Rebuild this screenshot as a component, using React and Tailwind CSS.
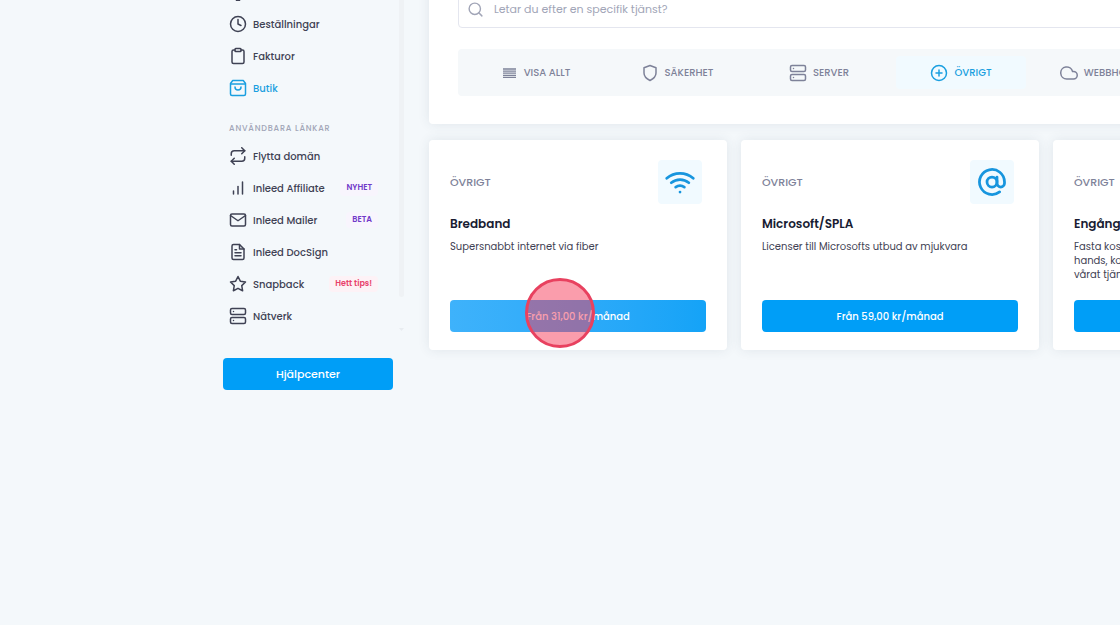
import {
  FiAtSign,
  FiBarChart,
  FiClipboard,
  FiClock,
  FiCloud,
  FiFileText,
  FiMail,
  FiPlusCircle,
  FiRepeat,
  FiSearch,
  FiServer,
  FiShield,
  FiStar,
  FiWifi,
} from "react-icons/fi";

const BagIcon = ({ className }) => (
  <svg
    className={className}
    viewBox="0 0 24 24"
    fill="none"
    stroke="currentColor"
    strokeWidth="2"
    strokeLinecap="round"
    strokeLinejoin="round"
  >
    <path d="M5 2h14l3 4v14a2 2 0 0 1-2 2H4a2 2 0 0 1-2-2V6z" />
    <path d="M2.5 6.500h19" />
    <path d="M16 10.500a4 4 0 0 1-8 0" />
  </svg>
);

const BulbIcon = ({ className }) => (
  <svg className={className} viewBox="0 0 24 24" fill="none" stroke="currentColor" strokeWidth="2" strokeLinecap="round">
    <path d="M8 17a7 7 0 1 1 8 0v2H8z" />
    <path d="M10.500 23h3" strokeWidth="3" />
  </svg>
);

const LinesIcon = ({ className }) => (
  <svg className={className} viewBox="0 0 18 18" stroke="currentColor" strokeWidth="1.300">
    <path d="M3 5h13M3 7.100h13M3 9.200h13M3 11.300h13M3 13.400h13" />
  </svg>
);

const accountLinks = [
  { label: "Tips", icon: BulbIcon },
  { label: "Beställningar", icon: FiClock },
  { label: "Fakturor", icon: FiClipboard },
  { label: "Butik", icon: BagIcon, active: true },
];

const usefulLinks = [
  { label: "Flytta domän", icon: FiRepeat },
  { label: "Inleed Affiliate", icon: FiBarChart, badge: "NYHET", badgeClass: "text-[#7239c9] bg-[#f8f5fd]" },
  { label: "Inleed Mailer", icon: FiMail, badge: "BETA", badgeClass: "text-[#7239c9] bg-[#f8f5fd]" },
  { label: "Inleed DocSign", icon: FiFileText },
  { label: "Snapback", icon: FiStar, badge: "Hett tips!", badgeClass: "text-[#e8416b] bg-[#fdf2f6]" },
  { label: "Nätverk", icon: FiServer },
];

const tabs = [
  { label: "VISA ALLT", icon: LinesIcon },
  { label: "SÄKERHET", icon: FiShield },
  { label: "SERVER", icon: FiServer },
  { label: "ÖVRIGT", icon: FiPlusCircle, active: true },
  { label: "WEBBHOTELL", icon: FiCloud },
  { label: "DOMÄN", icon: FiAtSign },
];

const products = [
  { title: "Bredband", text: "Supersnabbt internet via fiber", price: "Från 31,00 kr/månad", icon: FiWifi, hovered: true },
  { title: "Microsoft/SPLA", text: "Licenser till Microsofts utbud av mjukvara", price: "Från 59,00 kr/månad", icon: FiAtSign },
  {
    title: "Engångskostnad",
    text: "Fasta kostnader för olika engångsarbeten, remote hands, konsulttimmar samt installationer utöver vårat tjänsteutbud",
    price: "Från 99,00 kr",
    icon: FiPlusCircle,
  },
];

const SideLink = ({ item }) => {
  const Icon = item.icon;
  return (
    <li>
      <a
        href="#"
        className={`flex h-8 items-center gap-1.5 text-[10px] font-medium ${item.active ? "text-[#1a9fe0]" : "text-[#3f4254]"}`}
      >
        <Icon className="size-[18px]" />
        <span>{item.label}</span>
        {item.badge && (
          <span className={`ml-auto rounded px-1.5 py-0.5 text-[8px] font-semibold ${item.badgeClass}`}>{item.badge}</span>
        )}
      </a>
    </li>
  );
};

const ProductCard = ({ product }) => {
  const Icon = product.icon;
  return (
    <article className="flex min-h-[210px] flex-col rounded bg-white px-[21px] pt-5 pb-[18px] shadow-[0_0_12px_rgba(50,70,90,0.1)]">
      <div className="flex items-center justify-between pr-1">
        <span className="text-[11px] font-medium text-[#7e8299]">ÖVRIGT</span>
        <span className="flex size-11 items-center justify-center rounded bg-[#f1faff] text-[#1795de]">
          <Icon className="size-[30px]" strokeWidth="2.2" />
        </span>
      </div>
      <h2 className="mt-3 text-xs font-semibold leading-4 text-[#181c32]">{product.title}</h2>
      <p className="mt-2 text-[10px] leading-[14px] text-[#3f4254]">{product.text}</p>
      <button
        type="button"
        className={`mt-auto h-8 shrink-0 rounded text-[10px] font-medium text-white ${
          product.hovered ? "bg-linear-to-r from-[#3eb2fb] to-[#14a3f7]" : "bg-[#009ef7]"
        }`}
      >
        {product.price}
      </button>
    </article>
  );
};

export default function App() {
  return (
    <div className="relative flex min-h-screen items-start gap-[25px] overflow-hidden bg-[#f4f8fb] pl-[223px] font-['Poppins','Inter',sans-serif]">
      <aside className="w-[181px] shrink-0">
        <div className="flex justify-between pl-1.5">
          <div className="w-[149px]">
            <ul className="-mt-6">
              {accountLinks.map((item) => (
                <SideLink key={item.label} item={item} />
              ))}
            </ul>
            <h3 className="pt-[18px] pb-1 text-[8px] font-medium leading-[14px] tracking-widest text-[#a1a5b7]">
              ANVÄNDBARA LÄNKAR
            </h3>
            <ul>
              {usefulLinks.map((item) => (
                <SideLink key={item.label} item={item} />
              ))}
            </ul>
          </div>
          {/* scrollbar */}
          <div className="flex w-[5px] flex-col">
            <div className="flex-1 rounded-b bg-[#eff2f5]" />
            <svg className="mt-[30px] h-[5px] text-[#e8ecf0]" viewBox="0 0 5 5" fill="currentColor">
              <path d="M0 1h5L2.500 4z" />
            </svg>
          </div>
        </div>
        <button type="button" className="mt-[26px] h-8 w-[170px] rounded bg-[#009ef7] text-[11px] font-medium text-white">
          Hjälpcenter
        </button>
      </aside>

      <main className="min-w-[922px] flex-1">
        <section className="-mt-[38px] rounded bg-white px-[29px] pt-[29px] pb-7 shadow-[0_0_12px_rgba(50,70,90,0.1)]">
          <label className="flex h-[37px] items-center gap-2.5 rounded border border-[#e4e6ef] px-2 text-[#a1a5b7]">
            <FiSearch className="size-[17px]" />
            <input
              type="search"
              aria-label="Sök tjänst"
              placeholder="Letar du efter en specifik tjänst?"
              className="flex-1 text-[11px] outline-none placeholder:text-[#a1a5b7]"
            />
          </label>
          <nav className="mt-[21px] flex rounded bg-[#f5f8fa] px-1.5 py-[7px]">
            {tabs.map((tab) => {
              const Icon = tab.icon;
              return (
                <button
                  key={tab.label}
                  type="button"
                  className={`mx-1.5 flex h-[33px] flex-1 basis-0 items-center justify-center gap-1.5 rounded text-[10px] font-medium whitespace-nowrap ${
                    tab.active ? "bg-[#f1faff] text-[#1a9fe0]" : "text-[#7e8299]"
                  }`}
                >
                  <Icon className="size-[18px]" />
                  {tab.label}
                </button>
              );
            })}
          </nav>
        </section>

        <div className="mt-4 grid grid-cols-3 gap-3.5">
          {products.map((product) => (
            <ProductCard key={product.title} product={product} />
          ))}
        </div>
      </main>

      {/* click marker on top of the first product button */}
      <span className="pointer-events-none absolute top-[278px] left-[525px] size-[70px] rounded-full border-[3px] border-[#e8415f] bg-[#f63c5a]/50" />
    </div>
  );
}
